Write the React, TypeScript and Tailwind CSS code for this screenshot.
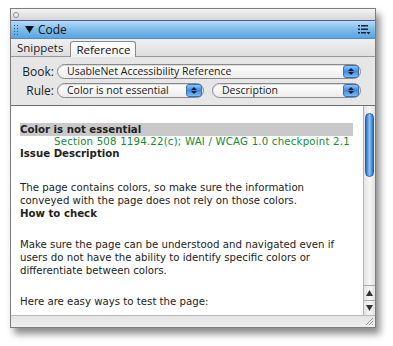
import React from "react";

const Stepper = () => (
  <div className="w-[16px] h-[13px] rounded-[3px] bg-gradient-to-b from-[#8ec3f2] via-[#3b8be0] to-[#7fbaf0] border border-[#3a6fb5] flex flex-col items-center justify-center gap-[1px]">
    <svg width="6" height="3" viewBox="0 0 6 3"><path d="M0 3 L3 0 L6 3 Z" fill="#0c1e3a" /></svg>
    <svg width="6" height="3" viewBox="0 0 6 3"><path d="M0 0 L6 0 L3 3 Z" fill="#0c1e3a" /></svg>
  </div>
);

const Select = ({ label, w }: { label: string; w: string }) => (
  <div className={`${w} h-[15px] rounded-full border border-[#8a8a8a] bg-gradient-to-b from-[#ffffff] to-[#ececec] flex items-center pl-[9px] pr-[1px] shadow-[inset_0_1px_1px_rgba(0,0,0,0.15)]`}>
    <span className="flex-1 text-[10.5px] text-[#1a1a1a] leading-[13px] whitespace-nowrap" style={{ fontFamily: '"Open Sans", sans-serif' }}>{label}</span>
    <Stepper />
  </div>
);

export default function App() {
  return (
    <div className="w-[393px] h-[346px] bg-white overflow-hidden relative" style={{ fontFamily: '"DejaVu Sans", Verdana, sans-serif' }}>
      <div className="ml-[10px] mt-[8px] w-[366px] h-[320px] border border-[#7d7d7d] bg-[#e8e8e8] flex flex-col shadow-[4px_6px_7px_rgba(0,0,0,0.45)]">
        {/* title strip */}
        <div className="h-[11px] bg-gradient-to-b from-[#f4f4f4] to-[#d6d6d6] flex items-center pl-[2px]">
          <div className="w-[6px] h-[6px] rounded-full border border-[#8c8c8c] bg-[#f4f4f4]" />
        </div>
        {/* blue bar */}
        <div className="h-[1px] bg-[#5b55a8]" />
        <div className="h-[18px] bg-gradient-to-b from-[#b6dcf7] via-[#7dbcec] to-[#5aa5e0] border-b border-[#4f8fc6] flex items-center pl-[3px] pr-[4px]">
          <svg width="4" height="10" viewBox="0 0 4 10" className="mr-[7px]">
            {[0, 3, 6, 9].map((y) => (
              <g key={y}>
                <rect x="0" y={y} width="1" height="1" fill="#1d4f80" />
                <rect x="3" y={y} width="1" height="1" fill="#1d4f80" />
              </g>
            ))}
          </svg>
          <svg width="9" height="7" viewBox="0 0 9 7" className="mr-[4px]"><path d="M0 0 L9 0 L4.5 7 Z" fill="#111" /></svg>
          <span className="text-[12px] leading-[14px] text-[#111]" style={{ fontFamily: '"Open Sans", sans-serif' }}>Code</span>
          <div className="flex-1" />
          <svg width="13" height="11" viewBox="0 0 13 11">
            <rect x="0" y="1" width="2" height="1.5" fill="#223" />
            <rect x="3" y="1" width="7" height="1.5" fill="#223" />
            <rect x="0" y="4.5" width="2" height="1.5" fill="#223" />
            <rect x="3" y="4.5" width="7" height="1.5" fill="#223" />
            <rect x="0" y="8" width="2" height="1.5" fill="#223" />
            <rect x="3" y="8" width="5" height="1.5" fill="#223" />
            <path d="M8.5 8 L12.5 8 L10.5 10.5 Z" fill="#223" />
          </svg>
        </div>
        {/* tabs */}
        <div className="h-[18px] bg-gradient-to-b from-[#f0f0f0] to-[#dedede] border-b border-[#9a9a9a] flex items-end pl-[5px]" style={{ fontFamily: '"Open Sans", sans-serif' }}>
          <div className="h-[16px] flex items-center px-[1px] text-[11.5px] text-[#222] leading-[14px] mr-[6px]">Snippets</div>
          <div className="h-[16px] flex items-center px-[5px] text-[11.5px] text-[#111] leading-[14px] bg-gradient-to-b from-[#ffffff] to-[#f2f2f2] border border-b-0 border-[#8a8a8a] rounded-t-[3px] mb-[-1px]">Reference</div>
        </div>
        {/* controls */}
        <div className="h-[48px] bg-[#e6e6e6] flex flex-col pt-[7px] gap-[4px]">
          <div className="flex items-center">
            <span className="w-[43px] text-right text-[12px] leading-[14px] text-[#222] mr-[3px]" style={{ fontFamily: '"Open Sans", sans-serif' }}>Book:</span>
            <Select label="UsableNet Accessibility Reference" w="w-[304px]" />
          </div>
          <div className="flex items-center">
            <span className="w-[43px] text-right text-[12px] leading-[14px] text-[#222] mr-[3px]" style={{ fontFamily: '"Open Sans", sans-serif' }}>Rule:</span>
            <Select label="Color is not essential" w="w-[147px]" />
            <div className="w-[8px]" />
            <Select label="Description" w="w-[149px]" />
          </div>
        </div>
        {/* content */}
        <div className="h-[210px] border-t border-[#6f6f6f] flex bg-white">
          <div className="flex-1 pl-[9px] pr-[10px] pt-[17px] text-[10.2px] text-[#222]">
            <div className="bg-[#c9c9c9] h-[13px] leading-[13px] font-bold text-[#222]">Color is not essential</div>
            <div className="leading-[12px] text-[#178a36] pl-[34px] tracking-[0.2px] whitespace-nowrap">Section 508 1194.22(c); WAI / WCAG 1.0 checkpoint 2.1</div>
            <div className="leading-[12px] font-bold">Issue Description</div>
            <div className="mt-[21px] leading-[13px]">
              <div>The page contains colors, so make sure the information</div>
              <div>conveyed with the page does not rely on those colors.</div>
              <div className="font-bold">How to check</div>
            </div>
            <div className="mt-[18px] leading-[13px]">
              <div>Make sure the page can be understood and navigated even if</div>
              <div>users do not have the ability to identify specific colors or</div>
              <div>differentiate between colors.</div>
            </div>
            <div className="mt-[18px] leading-[13px]">Here are easy ways to test the page:</div>
          </div>
          {/* scrollbar */}
          <div className="w-[12px] border-l border-[#b5b5b5] bg-gradient-to-r from-[#e2e2e2] via-[#f6f6f6] to-[#e2e2e2] flex flex-col">
            <div className="h-[7px]" />
            <div className="mx-[1px] h-[64px] rounded-full bg-gradient-to-r from-[#2c6fc2] via-[#8cc4f4] to-[#2c6fc2] border border-[#2b5fa6]" />
            <div className="flex-1" />
            <div className="h-[15px] border-t border-[#a8a8a8] flex items-center justify-center">
              <svg width="7" height="6" viewBox="0 0 7 6"><path d="M0 6 L3.5 0 L7 6 Z" fill="#333" /></svg>
            </div>
            <div className="h-[15px] border-t border-[#a8a8a8] flex items-center justify-center">
              <svg width="7" height="6" viewBox="0 0 7 6"><path d="M0 0 L7 0 L3.5 6 Z" fill="#333" /></svg>
            </div>
          </div>
        </div>
        {/* bottom strip */}
        <div className="flex-1 border-t border-[#b8b8b8] bg-gradient-to-b from-[#e4e4e4] to-[#f0f0f0] flex justify-end items-end">
          <svg width="10" height="10" viewBox="0 0 10 10" className="mr-[1px] mb-[1px]">
            <path d="M9 2 L2 9 M9 5 L5 9 M9 8 L8 9" stroke="#9a9a9a" strokeWidth="1" />
          </svg>
        </div>
      </div>
    </div>
  );
}
